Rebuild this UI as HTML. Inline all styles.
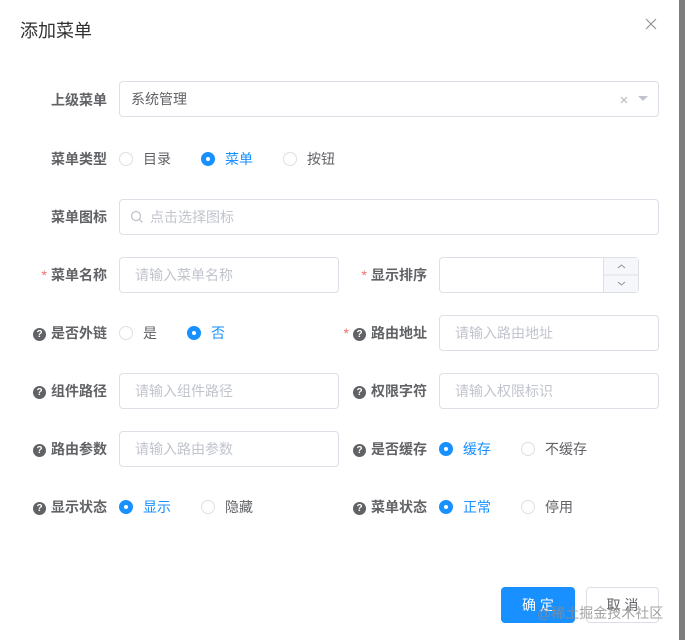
<!DOCTYPE html><html><head><meta charset="utf-8"><style>
*{box-sizing:border-box;margin:0;padding:0}
body{width:685px;height:640px;background:#fff;font-family:"Liberation Sans","Noto Sans CJK SC",sans-serif;font-size:14px;color:#606266;position:relative;overflow:hidden}
.strip{position:absolute;left:679px;top:0;width:6px;height:640px;background:#7d7d7d}
.title{position:absolute;left:20px;top:17px;font-size:18px;color:#303133}
.close{position:absolute;left:644px;top:17px;width:14px;height:14px}
.lbl{position:absolute;font-weight:bold;text-align:right;line-height:20px;white-space:nowrap}
.req{color:#f56c6c;font-weight:normal;margin-right:4px}
.q{display:inline-block;width:13px;height:13px;border-radius:50%;background:#606266;color:#fff;font-size:10px;line-height:13px;text-align:center;margin-right:5px;vertical-align:1px}
.inp{position:absolute;height:36px;border:1px solid #dcdfe6;border-radius:4px;color:#c0c4cc;padding-left:15px;line-height:34px}
.r{position:absolute;line-height:20px}
.c{display:inline-block;width:14px;height:14px;border:1px solid #dcdfe6;border-radius:50%;vertical-align:-2px;margin-right:10px;position:relative}
.c.on{background:#1890ff;border-color:#1890ff}
.c.on:after{content:"";position:absolute;left:4px;top:4px;width:4px;height:4px;border-radius:50%;background:#fff}
.blue{color:#1890ff}
</style></head><body>
<div class="title">添加菜单</div>
<svg class="close" viewBox="0 0 14 14"><path d="M2 2L12 12M12 2L2 12" stroke="#909399" stroke-width="1.2"/></svg>

<div class="lbl" style="right:578px;top:90px">上级菜单</div>
<div class="inp" style="left:119px;top:81px;width:540px;color:#606266;padding-left:11px">系统管理
<svg style="position:absolute;right:30px;top:14px" width="8" height="8" viewBox="0 0 8 8"><path d="M1 1L7 7M7 1L1 7" stroke="#c0c4cc" stroke-width="1.3"/></svg>
<span style="position:absolute;right:10px;top:14px;border:5px solid transparent;border-top:5px solid #c0c4cc"></span></div>

<div class="lbl" style="right:578px;top:149px">菜单类型</div>
<div class="r" style="left:119px;top:149px"><span class="c"></span>目录</div>
<div class="r" style="left:201px;top:149px" ><span class="c on"></span><span class="blue">菜单</span></div>
<div class="r" style="left:283px;top:149px"><span class="c"></span>按钮</div>

<div class="lbl" style="right:578px;top:207px">菜单图标</div>
<div class="inp" style="left:119px;top:199px;width:540px;padding-left:30px">点击选择图标
<svg style="position:absolute;left:10px;top:10px" width="14" height="14" viewBox="0 0 14 14"><circle cx="6" cy="6" r="4.5" fill="none" stroke="#c0c4cc" stroke-width="1.3"/><path d="M9.5 9.5L12.5 12.5" stroke="#c0c4cc" stroke-width="1.3"/></svg></div>

<div class="lbl" style="right:578px;top:265px"><span class="req">*</span>菜单名称</div>
<div class="inp" style="left:119px;top:257px;width:220px">请输入菜单名称</div>
<div class="lbl" style="right:258px;top:265px"><span class="req">*</span>显示排序</div>
<div class="inp" style="left:439px;top:257px;width:200px"><div style="position:absolute;right:0;top:0;width:35px;height:34px;border-left:1px solid #dcdfe6;background:#f5f7fa">
<svg style="position:absolute;left:0;top:0" width="35" height="34" viewBox="0 0 35 34"><path d="M0 17H35" stroke="#dcdfe6"/><path d="M14 10L17.5 7L21 10M14 24L17.5 27L21 24" fill="none" stroke="#909399" stroke-width="1"/></svg></div></div>

<div class="lbl" style="right:578px;top:323px"><span class="q">?</span>是否外链</div>
<div class="r" style="left:119px;top:323px"><span class="c"></span>是</div>
<div class="r" style="left:187px;top:323px"><span class="c on"></span><span class="blue">否</span></div>
<div class="lbl" style="right:258px;top:323px"><span class="req">*</span><span class="q">?</span>路由地址</div>
<div class="inp" style="left:439px;top:315px;width:220px">请输入路由地址</div>

<div class="lbl" style="right:578px;top:381px"><span class="q">?</span>组件路径</div>
<div class="inp" style="left:119px;top:373px;width:220px">请输入组件路径</div>
<div class="lbl" style="right:258px;top:381px"><span class="q">?</span>权限字符</div>
<div class="inp" style="left:439px;top:373px;width:220px">请输入权限标识</div>

<div class="lbl" style="right:578px;top:439px"><span class="q">?</span>路由参数</div>
<div class="inp" style="left:119px;top:431px;width:220px">请输入路由参数</div>
<div class="lbl" style="right:258px;top:439px"><span class="q">?</span>是否缓存</div>
<div class="r" style="left:439px;top:439px"><span class="c on"></span><span class="blue">缓存</span></div>
<div class="r" style="left:521px;top:439px"><span class="c"></span>不缓存</div>

<div class="lbl" style="right:578px;top:497px"><span class="q">?</span>显示状态</div>
<div class="r" style="left:119px;top:497px"><span class="c on"></span><span class="blue">显示</span></div>
<div class="r" style="left:201px;top:497px"><span class="c"></span>隐藏</div>
<div class="lbl" style="right:258px;top:497px"><span class="q">?</span>菜单状态</div>
<div class="r" style="left:439px;top:497px"><span class="c on"></span><span class="blue">正常</span></div>
<div class="r" style="left:521px;top:497px"><span class="c"></span>停用</div>

<div style="position:absolute;left:501px;top:587px;width:74px;height:36px;background:#1890ff;border-radius:4px;color:#fff;text-align:center;line-height:36px">确 定</div>
<div style="position:absolute;left:586px;top:587px;width:73px;height:36px;border:1px solid #dcdfe6;border-radius:4px;color:#606266;text-align:center;line-height:34px">取 消</div>
<div style="position:absolute;left:537px;top:603px;color:rgba(140,140,140,.8);font-size:14px">@稀土掘金技术社区</div>
<div class="strip"></div>
</body></html>
